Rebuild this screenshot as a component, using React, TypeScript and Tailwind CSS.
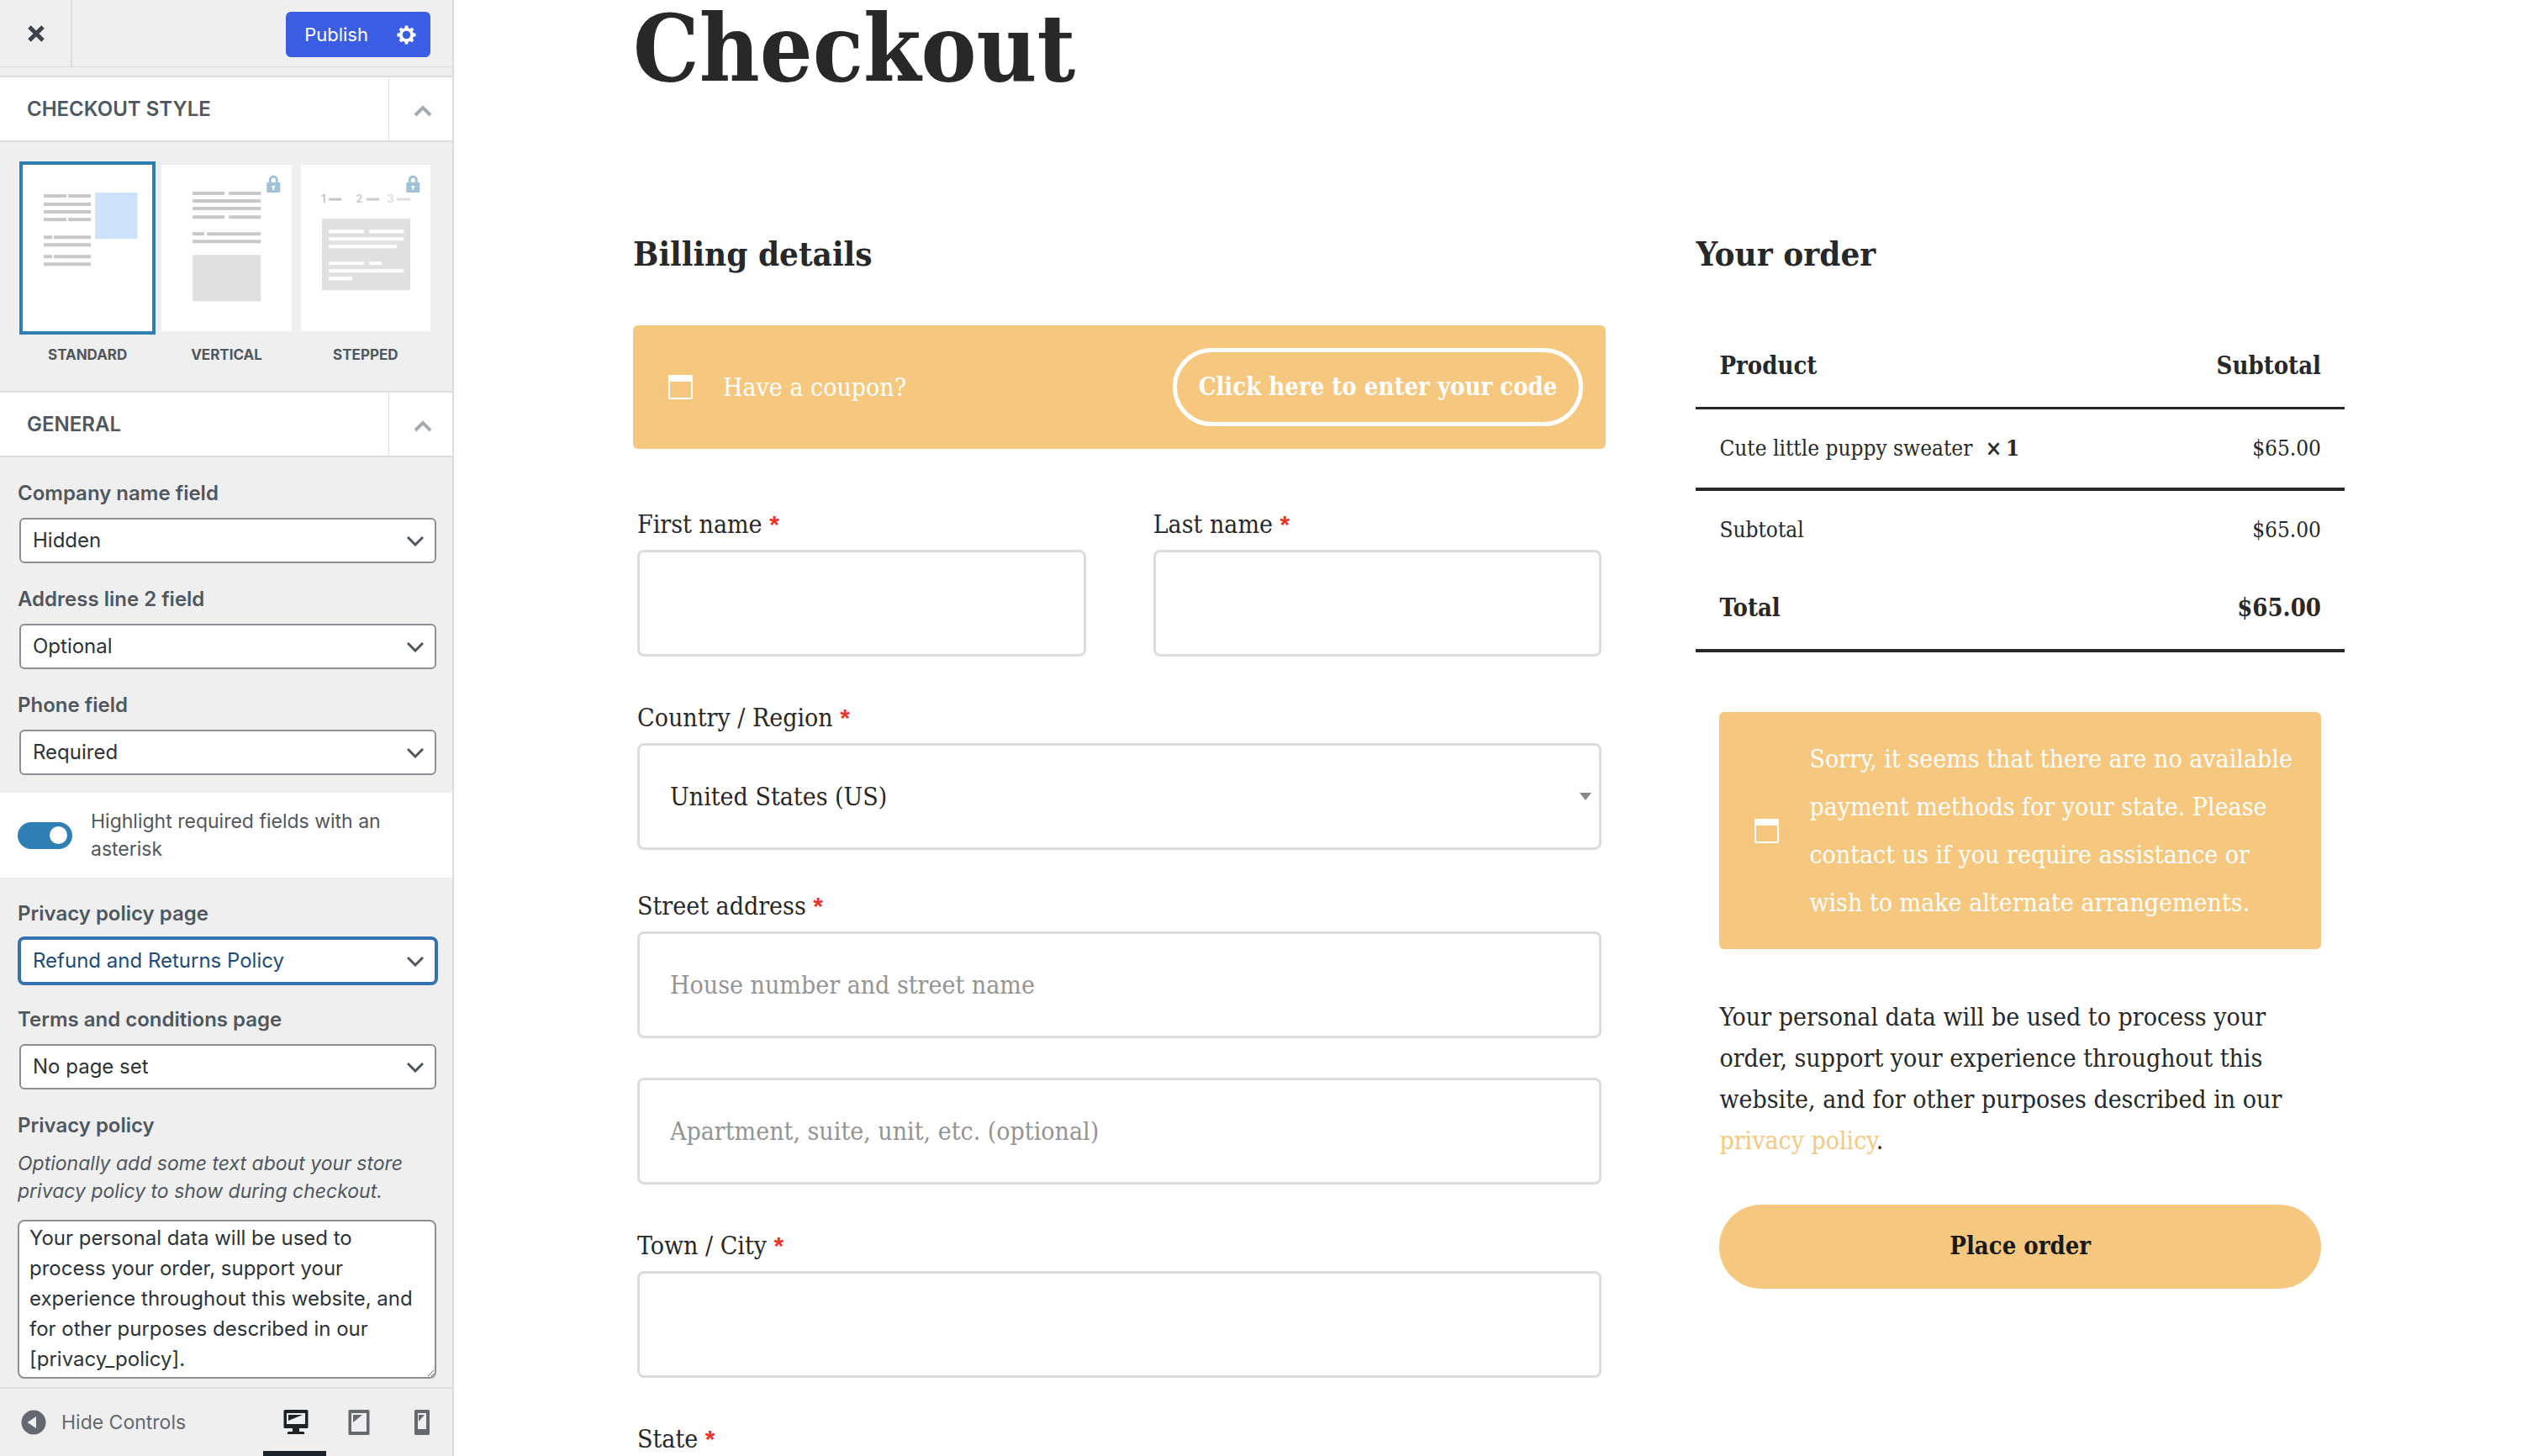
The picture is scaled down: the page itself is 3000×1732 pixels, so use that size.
import { useId, useState } from "react";

type Line = [x1: number, x2: number, y: number];

const standardLines: Line[] = [
    [25, 52, 37], [54, 81, 37], [25, 81, 47], [25, 81, 56], [25, 52, 65], [54, 81, 65],
    [25, 35, 86], [37, 81, 86], [25, 81, 95], [25, 35, 109], [37, 81, 109], [25, 81, 118],
];

const verticalLines: Line[] = [
    [37, 75, 34], [80, 118, 34], [37, 118, 43], [37, 118, 52], [37, 75, 62], [80, 118, 62],
    [37, 51, 82], [54, 118, 82], [37, 118, 91],
];

const steppedLines: Line[] = [
    [33, 75, 79], [81, 122, 79], [33, 122, 88], [33, 114, 97],
    [33, 75, 117], [81, 96, 117], [33, 122, 126], [33, 61, 135],
];

const styles = ["Standard", "Vertical", "Stepped"];

function Lines({ lines, color }: { lines: Line[]; color: string }) {
    return (
        <g stroke={color} strokeWidth="4">
            {lines.map(([x1, x2, y]) => (
                <line key={`${x1}-${y}`} x1={x1} x2={x2} y1={y} y2={y} />
            ))}
        </g>
    );
}

function StylePreview({ name }: { name: string }) {
    return (
        <svg viewBox="0 0 154 198" className="block w-full bg-white" aria-hidden="true">
            {name === "Standard" && (
                <>
                    <Lines lines={standardLines} color="#c8c8c8" />
                    <rect x="86" y="33" width="50" height="55" fill="#cee1fa" />
                </>
            )}
            {name === "Vertical" && (
                <>
                    <Lines lines={verticalLines} color="#c8c8c8" />
                    <rect x="37" y="107" width="81" height="55" fill="#e0e0e0" />
                </>
            )}
            {name === "Stepped" && (
                <>
                    <g fontFamily="Inter, sans-serif" fontSize="13" fontWeight="600">
                        <text x="24" y="45" fill="#c0c0c0">1</text>
                        <text x="65" y="45" fill="#cccccc">2</text>
                        <text x="102" y="45" fill="#dedede">3</text>
                    </g>
                    <g strokeWidth="3">
                        <line x1="33" x2="48" y1="41" y2="41" stroke="#c8c8c8" />
                        <line x1="78" x2="93" y1="41" y2="41" stroke="#cccccc" />
                        <line x1="114" x2="130" y1="41" y2="41" stroke="#dedede" />
                    </g>
                    <rect x="25" y="64" width="105" height="85" fill="#e0e0e0" />
                    <Lines lines={steppedLines} color="#ffffff" />
                </>
            )}
            {name !== "Standard" && (
                <g>
                    <path d="M129 22v-4a4 4 0 0 1 8 0v4" fill="none" stroke="#a1c1d8" strokeWidth="3" />
                    <rect x="125" y="21" width="16" height="12" rx="1" fill="#a1c1d8" />
                    <path d="M131 25h4v2h-1v3h-2v-3h-1z" fill="#fff" />
                </g>
            )}
        </svg>
    );
}

function PanelTitle({ children }: { children: string }) {
    return (
        <h2 className="flex h-[79px] border-y-2 border-[#dddddd] bg-white text-2xl font-semibold text-[#50575e]">
            <button type="button" className="flex flex-1 items-stretch text-left uppercase">
                <span className="flex-1 self-center pl-8">{children}</span>
                <span className="flex w-[76px] items-center justify-center border-l border-[#dddddd] pl-1">
                    <svg viewBox="0 0 22 14" className="mt-1 w-[22px]" fill="none" stroke="#a7aaad" strokeWidth="4" aria-hidden="true">
                        <path d="M2 12l9-9 9 9" />
                    </svg>
                </span>
            </button>
        </h2>
    );
}

function SelectField({ label, value, active }: { label: string; value: string; active?: boolean }) {
    const id = useId();

    return (
        <div>
            <label htmlFor={id} className="block text-2xl/[36px] font-semibold text-[#50575e]">
                {label}
            </label>
            <div className="relative mt-[11px] ml-[2px]">
                <select
                    id={id}
                    className={`block h-[54px] w-full appearance-none rounded-md border-2 bg-white pl-[14px] text-2xl outline-none ${active ? "border-[#3572b0] text-[#1d4b7a] ring-2 ring-[#3572b0]" : "border-[#8c8f94] text-[#2c3338]"}`}
                >
                    <option>{value}</option>
                </select>
                <svg viewBox="0 0 20 12" className="pointer-events-none absolute top-[22px] right-[15px] w-5" fill="none" stroke="#50575e" strokeWidth="3" aria-hidden="true">
                    <path d="M1 1l9 9 9-9" />
                </svg>
            </div>
        </div>
    );
}

function Sidebar() {
    const [style, setStyle] = useState("Standard");
    const [highlight, setHighlight] = useState(true);
    const [policy, setPolicy] = useState(
        "Your personal data will be used to process your order, support your experience throughout this website, and for other purposes described in our [privacy_policy]."
    );

    return (
        <aside className="flex w-[540px] shrink-0 flex-col border-r-2 border-[#dddddd] bg-[#efefef] font-[Inter,sans-serif]">
            <div className="mb-[10px] flex h-20 justify-between border-b border-[#dddddd]">
                <button type="button" aria-label="Close" className="flex w-[86px] items-center justify-center border-r-2 border-[#dddddd] pl-[2px]">
                    <svg viewBox="0 0 20 20" className="w-5" stroke="#3c434a" strokeWidth="5" aria-hidden="true">
                        <path d="M2 2l16 16M18 2L2 18" />
                    </svg>
                </button>
                <div className="mt-[14px] mr-[26px] flex h-[54px] rounded-md bg-[#3b5de3] text-white">
                    <button type="button" className="pr-[17px] pl-[22px] text-[22px]">Publish</button>
                    <button type="button" aria-label="Publish settings" className="px-[17px]">
                        <svg viewBox="0 0 24 24" className="w-[23px]" fill="none" stroke="currentColor" aria-hidden="true">
                            <circle cx="12" cy="12" r="7" strokeWidth="4" />
                            <path strokeWidth="4" d="M12 .5v4M12 19.500v4M.5 12h4M19.500 12h4M4 4l3 3M17 17l3 3M20 4l-3 3M7 17l-3 3" />
                        </svg>
                    </button>
                </div>
            </div>

            <PanelTitle>Checkout style</PanelTitle>
            <div className="grid grid-cols-3 gap-[11px] pt-[27px] pr-[26px] pb-[31px] pl-[27px]">
                {styles.map((name) => (
                    <label key={name} className="text-center text-[17px]/[24px] font-bold text-[#50575e] uppercase">
                        <input
                            type="radio"
                            name="checkout-style"
                            className="peer sr-only"
                            checked={style === name}
                            onChange={() => setStyle(name)}
                        />
                        <span className="mb-4 block ring-[#2f7fb5] peer-checked:ring-4">
                            <StylePreview name={name} />
                        </span>
                        {name}
                    </label>
                ))}
            </div>

            <PanelTitle>General</PanelTitle>
            <div className="flex flex-col gap-[25px] pt-[25px] pr-[19px] pb-[21px] pl-[21px]">
                <SelectField label="Company name field" value="Hidden" />
                <SelectField label="Address line 2 field" value="Optional" />
                <SelectField label="Phone field" value="Required" />
            </div>

            <label className="flex h-[101px] items-center gap-[22px] bg-white px-[21px] text-[23px]/[33px] text-[#50575e]">
                <input
                    type="checkbox"
                    className="peer sr-only"
                    checked={highlight}
                    onChange={(e) => setHighlight(e.target.checked)}
                />
                <span className="flex h-8 w-[65px] shrink-0 items-center rounded-full bg-[#8c8f94] px-[6px] peer-checked:justify-end peer-checked:bg-[#2f7fb5]">
                    <span className="size-[21px] rounded-full bg-white" />
                </span>
                Highlight required fields with an asterisk
            </label>

            <div className="flex flex-col gap-[25px] pt-[25px] pr-[19px] pl-[21px]">
                <SelectField label="Privacy policy page" value="Refund and Returns Policy" active />
                <SelectField label="Terms and conditions page" value="No page set" />
                <div>
                    <label htmlFor="policy" className="block text-2xl/[36px] font-semibold text-[#50575e]">
                        Privacy policy
                    </label>
                    <p className="mt-[11px] text-[23px]/[33px] text-[#50575e] italic">
                        Optionally add some text about your store privacy policy to show during checkout.
                    </p>
                    <textarea
                        id="policy"
                        value={policy}
                        onChange={(e) => setPolicy(e.target.value)}
                        className="mt-[17px] block h-[189px] w-full overflow-hidden rounded-lg border-2 border-[#8c8f94] bg-white px-3 pt-[2px] text-2xl/[36px] text-[#2c3338]"
                    />
                </div>
            </div>

            <div className="mt-auto flex h-[82px] justify-between border-t-2 border-[#dddddd]">
                <button type="button" className="flex items-center gap-[18px] pl-[25px] text-[23px] text-[#646970]">
                    <svg viewBox="0 0 30 30" className="w-[30px]" aria-hidden="true">
                        <circle cx="15" cy="15" r="14.5" fill="currentColor" />
                        <path d="M18 8v14L7.5 15z" fill="#efefef" />
                    </svg>
                    Hide Controls
                </button>
                <div className="flex">
                    <button type="button" aria-label="Desktop preview" className="flex w-[75px] items-center justify-center border-b-6 border-[#1d2327] pt-[6px] pl-[2px] text-[#1d2327]">
                        <svg viewBox="0 0 30 30" className="w-[30px]" fill="currentColor" aria-hidden="true">
                            <path fillRule="evenodd" d="M2 0h26a1.500 1.500 0 0 1 1.500 1.500v19a1.500 1.500 0 0 1-1.500 1.500H19v4h4a2 2 0 0 1 2 3H5a2 2 0 0 1 2-3h4v-4H2a1.500 1.500 0 0 1-1.500-1.500v-19A1.500 1.500 0 0 1 2 0zM4 4v13h22V4z" />
                            <path d="M6 6h17L6 13z" />
                        </svg>
                    </button>
                    <button type="button" aria-label="Tablet preview" className="flex w-[75px] items-center justify-center pl-[2px] text-[#646970]">
                        <svg viewBox="0 0 26 30" className="w-[26px]" fill="currentColor" aria-hidden="true">
                            <path fillRule="evenodd" d="M2 0h22a1.500 1.500 0 0 1 1.500 1.500v27A1.500 1.500 0 0 1 24 30H2a1.500 1.500 0 0 1-1.500-1.500v-27A1.500 1.500 0 0 1 2 0zM4 4v22h18V4z" />
                            <path d="M6 6h11L6 15z" />
                        </svg>
                    </button>
                    <button type="button" aria-label="Phone preview" className="flex w-[75px] items-center justify-center pl-[2px] text-[#646970]">
                        <svg viewBox="0 0 18 30" className="w-[18px]" fill="currentColor" aria-hidden="true">
                            <path fillRule="evenodd" d="M1.500 0h15A1.500 1.500 0 0 1 18 1.500v27a1.500 1.500 0 0 1-1.500 1.500h-15A1.500 1.500 0 0 1 0 28.500v-27A1.500 1.500 0 0 1 1.500 0zM4 4v19h10V4z" />
                            <path d="M5 6h7L5 14z" />
                        </svg>
                    </button>
                </div>
            </div>
        </aside>
    );
}

function NoticeIcon() {
    return (
        <svg viewBox="0 0 29 29" className="w-[29px] shrink-0" aria-hidden="true">
            <rect x="1" y="1" width="27" height="27" rx="1" fill="none" stroke="currentColor" strokeWidth="2" />
            <rect width="29" height="8" fill="currentColor" />
        </svg>
    );
}

const fieldClass = "block h-[127px] w-full rounded-lg border-3 border-[#dcdcdc] bg-white px-9 outline-none placeholder:text-[#949494]";

function FieldLabel({ htmlFor, children }: { htmlFor: string; children: string }) {
    return (
        <label htmlFor={htmlFor} className="mb-[10px] block h-10 leading-[40px]">
            {children} <span className="font-[Liberation_Sans,sans-serif] font-bold text-[#ed3224]">*</span>
        </label>
    );
}

function BillingForm() {
    return (
        <section>
            <h2 className="text-[40px]/[48px] font-bold">Billing details</h2>

            <div className="mt-[61px] flex h-[147px] items-center rounded-md bg-[#f6c77f] pr-[27px] pl-[42px] text-white">
                <NoticeIcon />
                <p className="ml-9 flex-1">Have a coupon?</p>
                <button type="button" className="h-[93px] rounded-full border-5 border-white px-[26px] text-[29px] font-bold">
                    Click here to enter your code
                </button>
            </div>

            <form className="mt-[70px] flex flex-col px-[5px]" onSubmit={(e) => e.preventDefault()}>
                <div className="grid grid-cols-2 gap-20">
                    <div>
                        <FieldLabel htmlFor="first-name">First name</FieldLabel>
                        <input id="first-name" type="text" className={fieldClass} />
                    </div>
                    <div>
                        <FieldLabel htmlFor="last-name">Last name</FieldLabel>
                        <input id="last-name" type="text" className={fieldClass} />
                    </div>
                </div>

                <div className="mt-[53px]">
                    <FieldLabel htmlFor="country">Country / Region</FieldLabel>
                    <div className="relative">
                        <select id="country" className={`${fieldClass} appearance-none`}>
                            <option>United States (US)</option>
                        </select>
                        <svg viewBox="0 0 14 9" className="pointer-events-none absolute top-[59px] right-3 w-[14px]" fill="#888888" aria-hidden="true">
                            <path d="M0 0h14L7 9z" />
                        </svg>
                    </div>
                </div>

                <div className="mt-[47px]">
                    <FieldLabel htmlFor="street">Street address</FieldLabel>
                    <input id="street" type="text" placeholder="House number and street name" className={fieldClass} />
                    <input
                        type="text"
                        aria-label="Apartment"
                        placeholder="Apartment, suite, unit, etc. (optional)"
                        className={`${fieldClass} mt-[47px]`}
                    />
                </div>

                <div className="mt-[53px]">
                    <FieldLabel htmlFor="city">Town / City</FieldLabel>
                    <input id="city" type="text" className={fieldClass} />
                </div>

                <div className="mt-[53px]">
                    <FieldLabel htmlFor="state">State</FieldLabel>
                    <input id="state" type="text" className={fieldClass} />
                </div>
            </form>
        </section>
    );
}

function OrderSummary() {
    return (
        <section>
            <h2 className="text-[40px]/[48px] font-bold">Your order</h2>

            <table className="mt-[61px] w-full border-separate border-spacing-0 text-[26px]">
                <thead className="text-[29px]">
                    <tr className="h-[100px]">
                        <th className="border-b-3 pl-7 text-left font-bold">Product</th>
                        <th className="border-b-3 pr-7 text-right font-bold">Subtotal</th>
                    </tr>
                </thead>
                <tbody>
                    <tr className="h-[97px]">
                        <td className="border-b-4 pl-7">
                            Cute little puppy sweater <strong className="ml-2">×&thinsp;1</strong>
                        </td>
                        <td className="border-b-4 pr-7 text-right">$65.00</td>
                    </tr>
                </tbody>
                <tfoot>
                    <tr className="h-[92px]">
                        <th className="pl-7 text-left font-normal">Subtotal</th>
                        <td className="pr-7 text-right">$65.00</td>
                    </tr>
                    <tr className="h-[100px] text-[29px] font-bold">
                        <th className="border-b-4 pl-7 text-left">Total</th>
                        <td className="border-b-4 pr-7 text-right">$65.00</td>
                    </tr>
                </tfoot>
            </table>

            <div className="mt-[71px] px-7">
                <div className="flex items-center rounded-md bg-[#f6c77f] py-[27px] pr-5 pl-[42px] leading-[57px] text-white">
                    <NoticeIcon />
                    <p className="ml-9">
                        Sorry, it seems that there are no available payment methods for your state. Please contact us if
                        you require assistance or wish to make alternate arrangements.
                    </p>
                </div>
                <p className="mt-14 leading-[49px]">
                    Your personal data will be used to process your order, support your experience throughout this
                    website, and for other purposes described in our{" "}
                    <a href="#privacy" className="text-[#f6c77f]">privacy policy</a>.
                </p>
                <button type="button" className="mt-[52px] h-[100px] w-full rounded-full bg-[#f6c77f] text-[29px] font-bold text-[#1a1a1a]">
                    Place order
                </button>
            </div>
        </section>
    );
}

export default function App() {
    return (
        <div className="flex h-screen overflow-hidden bg-white">
            <Sidebar />
            <main className="min-w-0 flex-1 pt-[3px] pr-[211px] pl-[213px] font-[DejaVu_Serif_Condensed,DejaVu_Serif,serif] text-[30px] text-[#282828]">
                <h1 className="text-[110px]/[110px] font-bold">Checkout</h1>
                <div className="mt-[165px] grid grid-cols-[3fr_2fr] gap-[107px]">
                    <BillingForm />
                    <OrderSummary />
                </div>
            </main>
        </div>
    );
}
